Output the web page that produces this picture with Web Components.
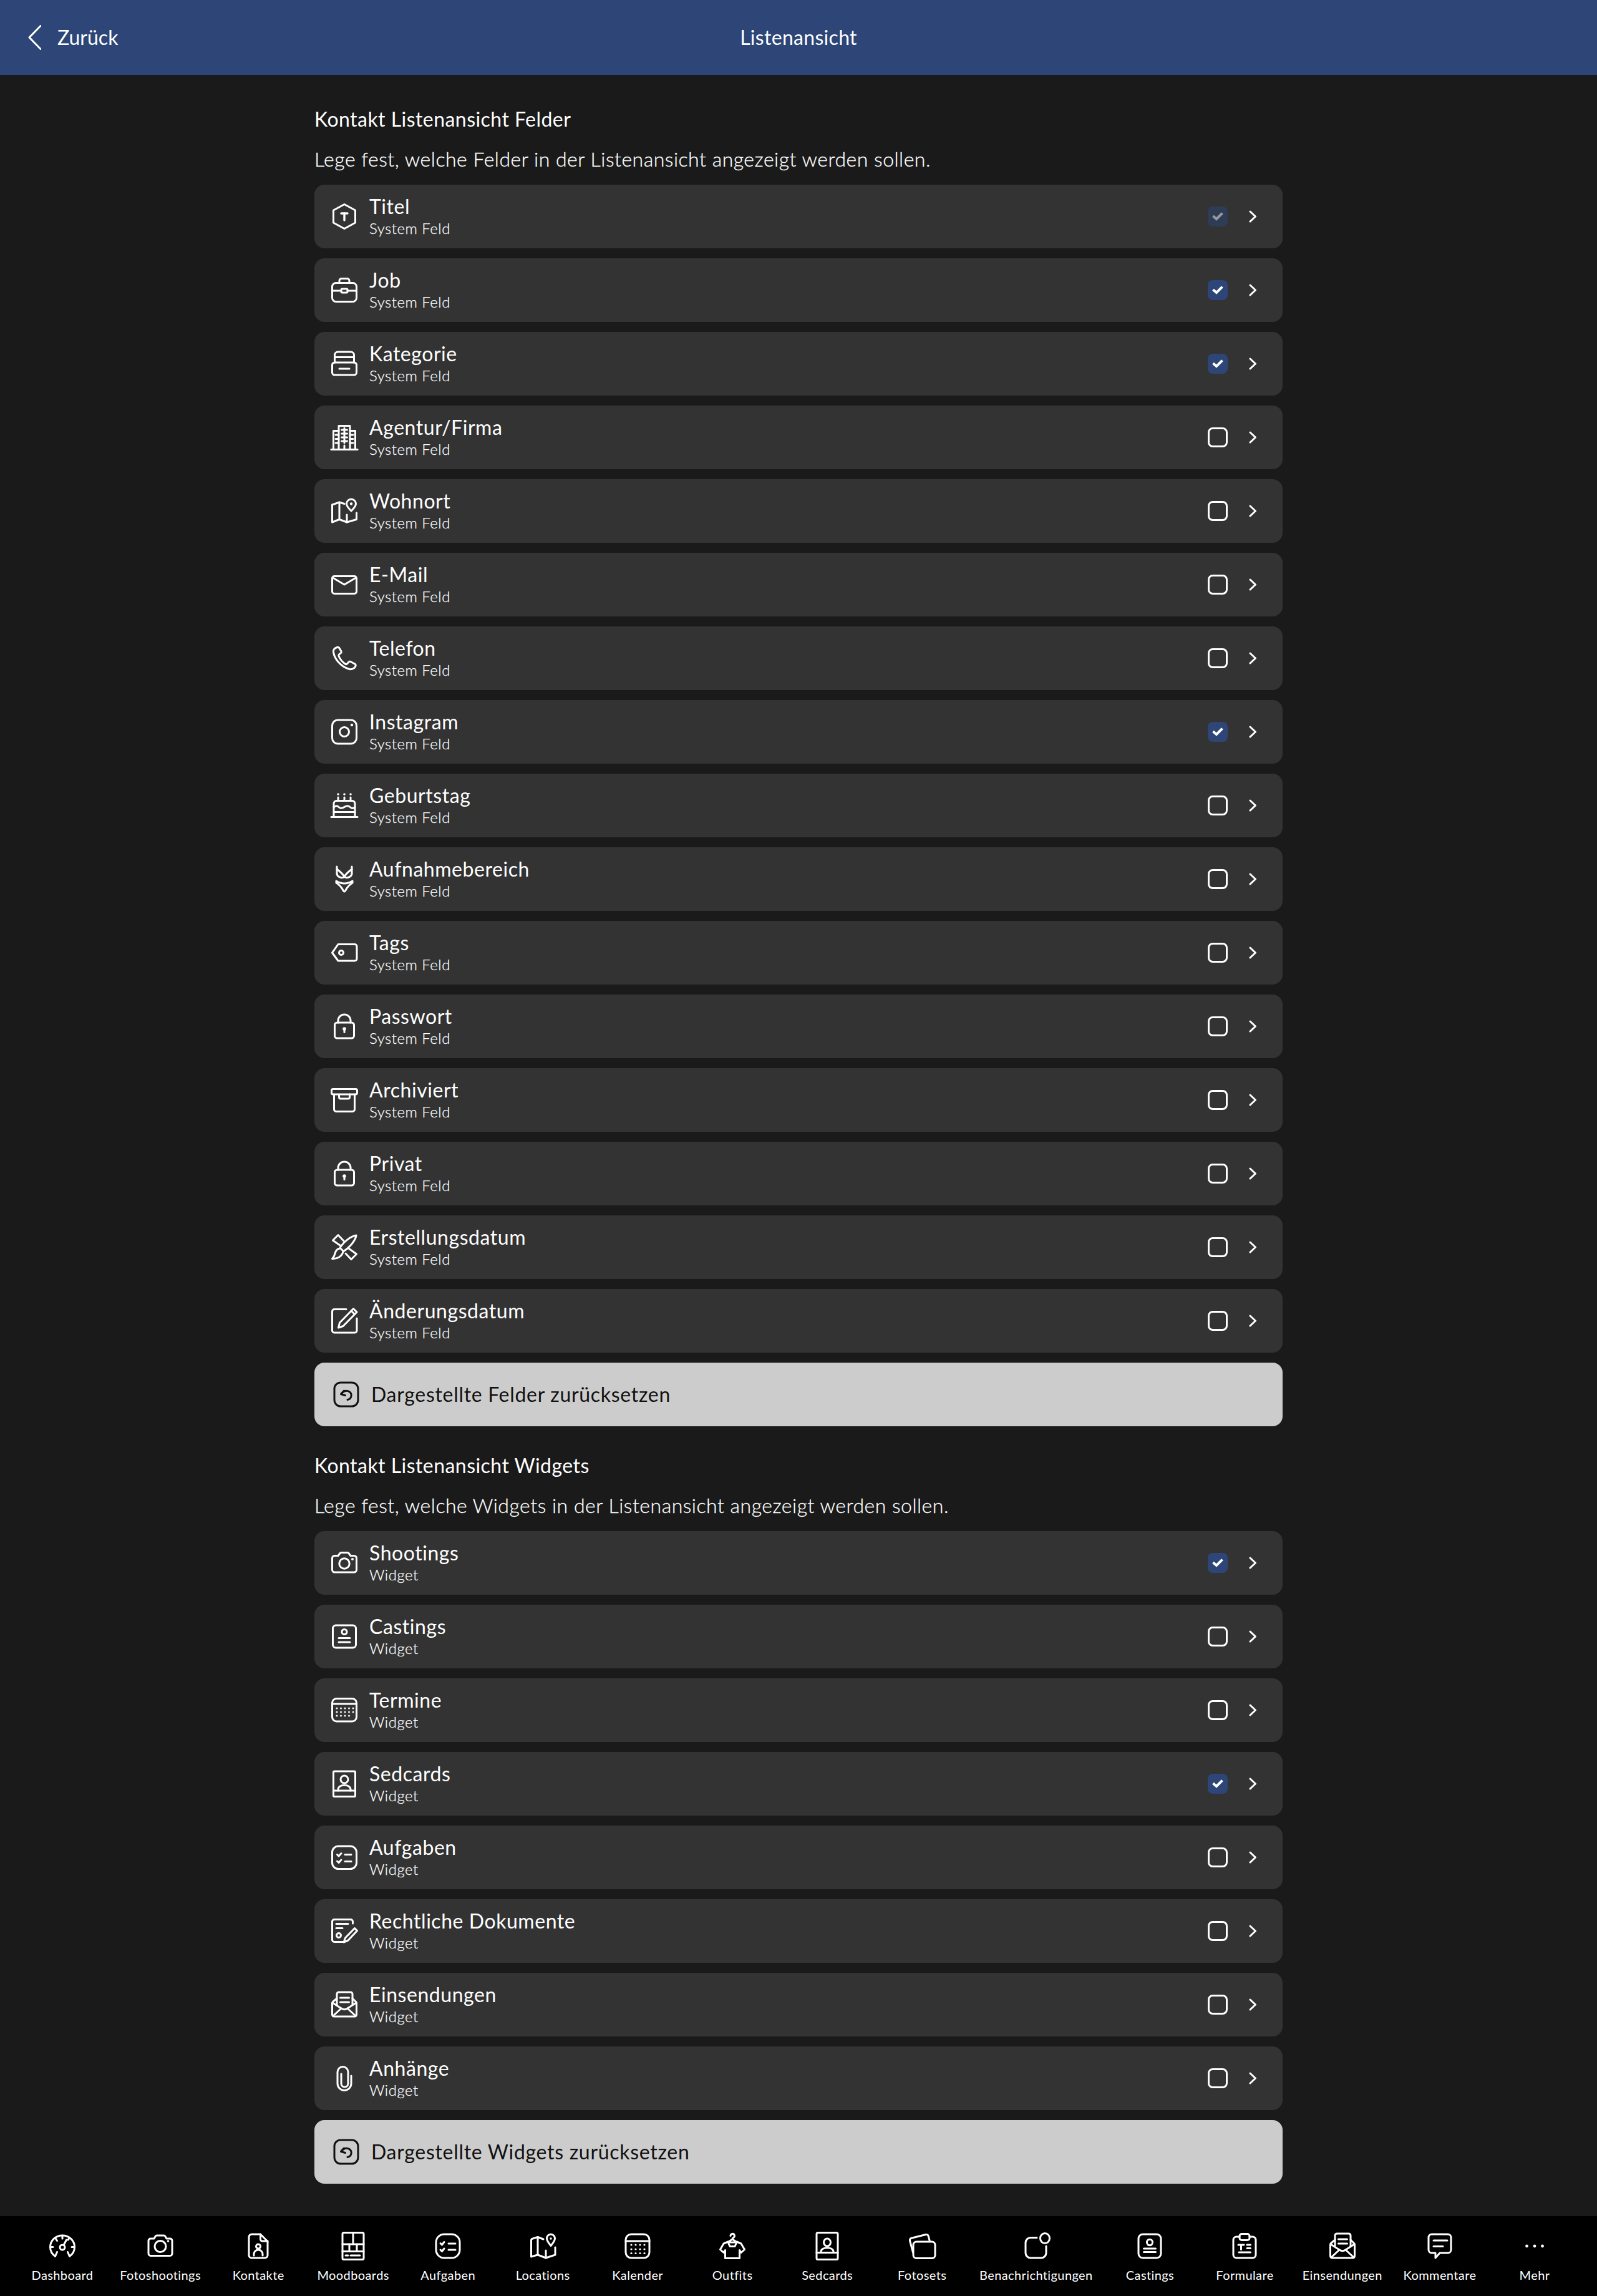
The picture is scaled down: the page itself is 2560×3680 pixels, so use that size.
<!DOCTYPE html>
<html lang="de">
<head>
<meta charset="utf-8">
<title>Listenansicht</title>
<style>
html,body{margin:0;padding:0;background:#1a1a1a;}
body{font-family:"Lato","Noto Sans",sans-serif;color:#fff;}
</style>
</head>
<body>
<x-app>
  <x-header slot="header" back="Zurück">Listenansicht</x-header>
  <x-section heading="Kontakt Listenansicht Felder" desc="Lege fest, welche Felder in der Listenansicht angezeigt werden sollen.">
    <x-row icon="titel" checked dim>Titel<span slot="sub">System Feld</span></x-row>
    <x-row icon="job" checked>Job<span slot="sub">System Feld</span></x-row>
    <x-row icon="kategorie" checked>Kategorie<span slot="sub">System Feld</span></x-row>
    <x-row icon="agentur">Agentur/Firma<span slot="sub">System Feld</span></x-row>
    <x-row icon="wohnort">Wohnort<span slot="sub">System Feld</span></x-row>
    <x-row icon="mail">E-Mail<span slot="sub">System Feld</span></x-row>
    <x-row icon="telefon">Telefon<span slot="sub">System Feld</span></x-row>
    <x-row icon="instagram" checked>Instagram<span slot="sub">System Feld</span></x-row>
    <x-row icon="cake">Geburtstag<span slot="sub">System Feld</span></x-row>
    <x-row icon="bikini">Aufnahmebereich<span slot="sub">System Feld</span></x-row>
    <x-row icon="tag">Tags<span slot="sub">System Feld</span></x-row>
    <x-row icon="lock">Passwort<span slot="sub">System Feld</span></x-row>
    <x-row icon="archive">Archiviert<span slot="sub">System Feld</span></x-row>
    <x-row icon="lock">Privat<span slot="sub">System Feld</span></x-row>
    <x-row icon="design">Erstellungsdatum<span slot="sub">System Feld</span></x-row>
    <x-row icon="edit">Änderungsdatum<span slot="sub">System Feld</span></x-row>
    <x-reset>Dargestellte Felder zurücksetzen</x-reset>
  </x-section>
  <x-section second heading="Kontakt Listenansicht Widgets" desc="Lege fest, welche Widgets in der Listenansicht angezeigt werden sollen.">
    <x-row icon="camera" checked>Shootings<span slot="sub">Widget</span></x-row>
    <x-row icon="casting">Castings<span slot="sub">Widget</span></x-row>
    <x-row icon="termine">Termine<span slot="sub">Widget</span></x-row>
    <x-row icon="sedcard" checked>Sedcards<span slot="sub">Widget</span></x-row>
    <x-row icon="tasks">Aufgaben<span slot="sub">Widget</span></x-row>
    <x-row icon="legal">Rechtliche Dokumente<span slot="sub">Widget</span></x-row>
    <x-row icon="inbox">Einsendungen<span slot="sub">Widget</span></x-row>
    <x-row icon="clip">Anhänge<span slot="sub">Widget</span></x-row>
    <x-reset>Dargestellte Widgets zurücksetzen</x-reset>
  </x-section>
  <x-nav slot="nav">
    <x-nav-item icon="dashboard">Dashboard</x-nav-item>
    <x-nav-item icon="navcamera">Fotoshootings</x-nav-item>
    <x-nav-item icon="contact">Kontakte</x-nav-item>
    <x-nav-item icon="mood">Moodboards</x-nav-item>
    <x-nav-item icon="navtasks">Aufgaben</x-nav-item>
    <x-nav-item icon="navmap">Locations</x-nav-item>
    <x-nav-item icon="calendar">Kalender</x-nav-item>
    <x-nav-item icon="outfit">Outfits</x-nav-item>
    <x-nav-item icon="navsed">Sedcards</x-nav-item>
    <x-nav-item icon="sets">Fotosets</x-nav-item>
    <x-nav-item icon="bell">Benachrichtigungen</x-nav-item>
    <x-nav-item icon="navcast">Castings</x-nav-item>
    <x-nav-item icon="form">Formulare</x-nav-item>
    <x-nav-item icon="inbox">Einsendungen</x-nav-item>
    <x-nav-item icon="comment">Kommentare</x-nav-item>
    <x-nav-item icon="more">Mehr</x-nav-item>
  </x-nav>
</x-app>
<script>
const dot=(x,y,r=1.7)=>`<circle cx="${x}" cy="${y}" r="${r}" fill="currentColor" stroke="none"/>`;
const ICONS={
 titel:`<path d="M24 4.500 L41.500 14 V34 L24 43.500 L6.500 34 V14 Z"/><path d="M19 19 H29" stroke-width="3.400"/><path d="M24 19 V30" stroke-width="3.400"/>`,
 job:`<rect x="4.500" y="12.500" width="39" height="30" rx="6"/><path d="M16 12 V9 a3.500 3.500 0 0 1 3.500-3.500 H28.500 a3.500 3.500 0 0 1 3.500 3.500 V12"/><path d="M4.500 25 H19 M29 25 H43.500"/><rect x="19" y="22" width="10" height="6" rx="1.500"/>`,
 kategorie:`<path d="M8.500 22 V10 a5 5 0 0 1 5-5 H34.500 a5 5 0 0 1 5 5 V22"/><path d="M8.500 13.500 H39.500"/><rect x="4.500" y="22" width="39" height="20" rx="4"/><path d="M16 32 H32"/>`,
 agentur:`<path d="M3 43.500 H45"/><path d="M15 43 V5.500 H33 V43"/><path d="M6.500 43 V13.500 H15 M33 13.500 H41.500 V43"/><path d="M19.500 12 H28.500 M19.500 18 H28.500 M19.500 24 H28.500 M19.500 30 H28.500"/><path d="M24 9 V33"/><path d="M24 37 V43"/><path d="M10 20 H15 M10 26.500 H15 M10 33 H15 M33 20 H38 M33 26.500 H38 M33 33 H38"/>`,
 wohnort:`<path d="M24 12.500 L16 10 L4.500 14 V42 L16 37.500 L28 42 L43.500 37.500 V27"/><path d="M16 10 V37.500"/><path d="M28 30 V42"/><path d="M35 24 C31 20 27.500 16.500 27.500 12.500 A7.500 7.500 0 0 1 42.500 12.500 C42.500 16.500 39 20 35 24 Z"/>${dot(35,12.5,2.2)}`,
 mail:`<rect x="4.500" y="10.500" width="39" height="28" rx="3.500"/><path d="M5.500 13 L24 24 L42.500 13"/>`,
 telefon:`<path d="M12.500 6.500 C8.500 7.500 6 10.500 6.500 14 C8 25.500 19 38 32 41.500 C36.500 42.500 41 39.500 42 36.500 C42.500 35 42 34 41 33.300 L34 29.500 C32.800 29 31.700 29.300 31 30.100 L28.300 33 C27.600 33.800 26.500 33.900 25.600 33.300 C20.800 30 17 25.500 15 20.500 C14.600 19.500 14.900 18.500 15.600 17.900 L18.400 15.600 C19.200 14.900 19.400 13.900 19 13 L15.800 7.500 C15 6.500 13.800 6.200 12.500 6.500 Z"/>`,
 instagram:`<rect x="4.500" y="5" width="39" height="38" rx="9"/><circle cx="24" cy="24" r="7.500"/>${dot(36,13,2.2)}`,
 cake:`<path d="M3 42.500 H45"/><path d="M7 42 V21 a4.500 4.500 0 0 1 4.500-4.500 H36.500 a4.500 4.500 0 0 1 4.500 4.500 V42"/><path d="M7 27 C10 24 12.500 24 15 26.500 C17.500 29 20 29 24 26.500 C28 24 30.500 24 33 26.500 C35.500 29 38 29 41 27"/><path d="M7 34.500 H41"/><path d="M14 11 V16 M24 11 V16 M34 11 V16"/>${dot(14,6,1.8)}${dot(24,6,1.8)}${dot(34,6,1.8)}`,
 bikini:`<path d="M12 4 V15 M36 4 V15"/><path d="M12 8 C16 11 21 15 24 20 C27 15 32 11 36 8"/><path d="M12 15 C12 20 20 24 24 20 C28 24 36 20 36 15"/><path d="M11 27 C16 30 20 31 24 31 C28 31 32 30 37 27 V30 C32 33 28 38 26 42 C25 44.500 23 44.500 22 42 C20 38 16 33 11 30 Z"/>`,
 tag:`<path d="M14 10.500 H40.500 a3.500 3.500 0 0 1 3.500 3.500 V33.500 a3.500 3.500 0 0 1-3.500 3.500 H14 L4.500 24 Z"/><circle cx="19" cy="24" r="3.500"/>`,
 lock:`<rect x="8.500" y="18" width="31" height="25" rx="4"/><path d="M14 18 V15 a10 10 0 0 1 20 0 V18"/>${dot(24,28,2.800)}<path d="M24 28 V33.500"/>`,
 archive:`<rect x="3.500" y="6.500" width="41" height="8.500" rx="2.500"/><path d="M7.500 15 V39 a3.500 3.500 0 0 0 3.500 3.500 H37 a3.500 3.500 0 0 0 3.500-3.500 V15"/><path d="M15.500 15 V19.500 a2.500 2.500 0 0 0 2.500 2.500 H30 a2.500 2.500 0 0 0 2.500-2.500 V15"/>`,
 design:`<path d="M17 21 L5.500 13 L14 4.500 L23 14"/><path d="M31 26 L43.500 35 L35 43.500 L26 34"/><path d="M43 5 C35 6 23 15 17 25 L22.500 30.500 C32 25 42 13 43 5 Z"/><path d="M16.500 26 C11 27 10 31 8.500 35.500 C8 38 6.500 40.500 4.500 42.500 C12 43 20.500 39 22 31"/>`,
 edit:`<path d="M27 5.500 H8 a3.500 3.500 0 0 0-3.500 3.500 V39.500 a3.500 3.500 0 0 0 3.500 3.500 H40.500 a3.500 3.500 0 0 0 3.500-3.500 V20"/><path d="M38.500 4.500 L44 10 L22 32.500 L14.500 35 L16.500 27 Z"/><path d="M35 8 L40.500 13.500"/>`,
 camera:`<path d="M4.500 16.500 a4 4 0 0 1 4-4 H14 L17 8.500 a3 3 0 0 1 2-1 H29 a3 3 0 0 1 2 1 L34 12.500 H39.500 a4 4 0 0 1 4 4 V35 a4 4 0 0 1-4 4 H8.500 a4 4 0 0 1-4-4 Z"/><circle cx="24" cy="25" r="8.200"/>${dot(37,18,2)}`,
 casting:`<rect x="5.500" y="6" width="37" height="36" rx="5"/><circle cx="24" cy="16.500" r="4"/><path d="M15 26.500 H33 M15 33 H33"/>`,
 termine:`<rect x="4.500" y="5.500" width="39" height="36.500" rx="7"/><path d="M4.500 14 H43.500"/>${[21,27,33].map(y=>[12,18.500,25,31.500,38].map(x=>(y==33&&x==38)?'':dot(x,y,1.500)).join('')).join('')}`,
 sedcard:`<rect x="6.500" y="4" width="35" height="40.500" rx="1.500"/><path d="M6.500 35 H41.500"/><circle cx="24" cy="17" r="6"/><path d="M14 35 V33 C14 24 34 24 34 33 V35"/>`,
 tasks:`<rect x="4.500" y="6" width="39" height="36.500" rx="10"/><path d="M12.500 19.500 L15 22 L19 17.500 M12.500 30 L15 32.500 L19 28"/><path d="M25 19.500 H35 M25 30.500 H35"/>`,
 legal:`<path d="M37.500 12 V9 a3.500 3.500 0 0 0-3.500-3.500 H8 a3.500 3.500 0 0 0-3.500 3.500 V38 a3.500 3.500 0 0 0 3.500 3.500 H22"/><path d="M11 12.500 H30 M11 19.500 H21"/><circle cx="15" cy="31" r="3.500"/><path d="M40.500 19.500 L44.500 23.500 L30 39 L23 42 L25.500 35 Z"/>`,
 inbox:`<path d="M12 24 V7 a3 3 0 0 1 3-3 H34 a3 3 0 0 1 3 3 V24"/><path d="M17.500 13 H31.500"/><path d="M17.500 20 H31.500"/><path d="M12 14 L6 19 a4 4 0 0 0-1.500 3 V40 a3 3 0 0 0 3 3 H40.500 a3 3 0 0 0 3-3 V22 a4 4 0 0 0-1.500-3 L37 14"/><path d="M5 21 L19 30 C22 32 26 32 29 30 L43 21"/><path d="M6 42 L19 30"/><path d="M42 42 L29 30"/>`,
 clip:`<path d="M35 20 V32.500 a11 11 0 0 1-22 0 V14 a8.500 8.500 0 0 1 17 0 V32.500 a5.500 5.500 0 0 1-11 0 V17"/>`,
 dashboard:`<path d="M12.500 40.500 C7.500 37 4.500 31.500 4.500 25.500 C4.500 15 13 7 24 7 C35 7 43.500 15 43.500 25.500 C43.500 31.500 40.500 37 35.500 40.500 L32.500 33.500 M12.500 40.500 L15.500 33.500"/><circle cx="24" cy="26" r="4"/><path d="M26 22.500 L30.500 14"/><path d="M24 7 V12 M13 11.500 L15.500 15.500 M35 11.500 L33 14 M4.500 25.500 H9 M39 25.500 H43.500"/>`,
 navcamera:`<path d="M5 15.500 a3.500 3.500 0 0 1 3.500-3.500 H14 L16 8.500 a3 3 0 0 1 2.500-1.500 H29.500 a3 3 0 0 1 2.500 1.500 L34 12 H39.500 a3.500 3.500 0 0 1 3.500 3.500 V36 a3.500 3.500 0 0 1-3.500 3.500 H8.500 a3.500 3.500 0 0 1-3.500-3.500 Z"/><circle cx="24" cy="24.500" r="9"/>${dot(36.500,16,1.800)}`,
 contact:`<path d="M27.500 5 H13.500 a4.500 4.500 0 0 0-4.500 4.500 V38.500 a4.500 4.500 0 0 0 4.500 4.500 H34.500 a4.500 4.500 0 0 0 4.500-4.500 V16.500 Z"/><path d="M27.500 5 V13 a3 3 0 0 0 3 3 H39"/><circle cx="24" cy="24.500" r="3.500"/><path d="M17 39 V37 a7 7 0 0 1 14 0 V39"/>`,
 mood:`<rect x="7" y="2.500" width="34" height="43" rx="2"/><path d="M7 21 H41 M7 32.500 H41"/><path d="M24 2.500 V21 M18 21 V32.500 M30 21 V32.500"/><path d="M12 39 H16 M20 39 H35"/>`,
 navtasks:`<rect x="5" y="5" width="38" height="38" rx="13"/><path d="M12 19.500 L14.500 22 L18 17.500 M12 30 L14.500 32.500 L18 28"/><path d="M25 20 H36 M25 30 H36"/>`,
 navmap:`<path d="M25 13 L16 9.500 L8 12 a3 3 0 0 0-2.500 3 V41 L16 38 L29 43 L44 38 V26"/><path d="M16 9.500 V38"/><path d="M29 31 V43"/><path d="M37 23.500 C33.500 19 30.500 15.500 30.500 12 A6.500 7 0 0 1 43.500 12 C43.500 15.500 40.500 19 37 23.500 Z"/>${dot(37,12,1.800)}`,
 calendar:`<rect x="5" y="5" width="38" height="38" rx="9"/><path d="M5 16 H43"/>${[22,29,35.500].map(y=>[14,21,28,35].map(x=>dot(x,y,1.600)).join('')).join('')}`,
 outfit:`<path d="M21 7.500 a3.200 3.200 0 1 1 4.500 3 C24.500 11 24 12 24 13"/><path d="M24 13 L31.500 18 H16.500 Z"/><path d="M18 20 L20 24.500 H28 L30 20" /><path d="M17 17 L10 20 L4.500 29.500 L10 34.500 L12.500 30.500 V43.500 H35.500 V30.500 L38 34.500 L43.500 29.500 L38 20 L31 17"/>`,
 navsed:`<rect x="7" y="2.500" width="34" height="43" rx="2"/><path d="M7 34.500 H41"/><ellipse cx="24" cy="18" rx="5.500" ry="6"/><path d="M14 34.500 V33 C14 24.500 34 24.500 34 33 V34.500"/>`,
 sets:`<rect x="10" y="17" width="35" height="26.500" rx="5"/><path d="M9.500 34 L4.500 15.500 a3.500 3.500 0 0 1 2.500-4.200 L30 5.500 a3.500 3.500 0 0 1 4.200 2.500 L36.500 16.500"/>`,
 bell:`<path d="M25 10.500 H15 a8 8 0 0 0-8 8 V35 a8 8 0 0 0 8 8 H32 a8 8 0 0 0 8-8 V24"/><ellipse cx="38" cy="11.500" rx="7.500" ry="8"/>`,
 navcast:`<rect x="6" y="5" width="36" height="38" rx="7"/><ellipse cx="24" cy="18" rx="4.500" ry="4.800"/><path d="M14.500 28 H33.500 M14.500 33.500 H33.500"/>`,
 form:`<path d="M16 9 H11 a5 5 0 0 0-5 5 V38 a5 5 0 0 0 5 5 H37 a5 5 0 0 0 5-5 V14 a5 5 0 0 0-5-5 H32"/><rect x="16" y="4.500" width="16" height="10" rx="3.500"/><path d="M14 22 H23 M18.500 22 V29.500"/><path d="M28 22 H33.500 M28 27.500 H33.500"/><path d="M15 34 H33.500"/>`,
 comment:`<path d="M11 5 H37 a5 5 0 0 1 5 5 V30 a5 5 0 0 1-5 5 H24 L17 43 V35 H11 a5 5 0 0 1-5-5 V10 a5 5 0 0 1 5-5 Z"/><path d="M14 15 H36 M14 24.500 H29"/>`,
 more:`${dot(11.5,24,2.4)}${dot(24,24,2.4)}${dot(36.5,24,2.4)}`
};
class XIcon extends HTMLElement{
  connectedCallback(){
    if(this.shadowRoot)return;
    const r=this.attachShadow({mode:'open'});
    r.innerHTML=`<style>:host{display:block;width:48px;height:48px;flex:none;color:inherit}svg{display:block;width:48px;height:48px;overflow:visible}</style>
    <svg viewBox="0 0 48 48" fill="none" stroke="currentColor" stroke-width="3" stroke-linecap="round" stroke-linejoin="round">${ICONS[this.getAttribute('name')]||''}</svg>`;
  }
}
customElements.define('x-icon',XIcon);

class XApp extends HTMLElement{
  constructor(){super();this.attachShadow({mode:'open'}).innerHTML=`<style>
  :host{display:flex;flex-direction:column;min-height:3680px;background:#1a1a1a}
  main{flex:1;display:flex;flex-direction:column;align-items:center}
  </style><slot name="header"></slot><main><slot></slot></main><slot name="nav"></slot>`;}
}
customElements.define('x-app',XApp);

class XHeader extends HTMLElement{
  constructor(){super();const b=this.getAttribute('back')||'';this.attachShadow({mode:'open'}).innerHTML=`<style>
  :host{display:grid;grid-template-columns:1fr auto 1fr;align-items:center;height:120px;background:#2d4677;color:#fff;font:400 32px/48px "Lato",sans-serif;padding:0 45px;box-sizing:border-box}
  .back{display:flex;align-items:center;gap:26px}
  svg{width:21px;height:40px;display:block}
  .title{letter-spacing:.3px}
  </style><div class="back"><svg viewBox="0 0 21 40" fill="none" stroke="#fff" stroke-width="3" stroke-linecap="round" stroke-linejoin="round"><path d="M20 1.500 L2 20 L20 38.500"/></svg><span id="b"></span></div><div class="title"><slot></slot></div><div></div>`;
  this.shadowRoot.getElementById('b').textContent=b;}
}
customElements.define('x-header',XHeader);

class XSection extends HTMLElement{
  connectedCallback(){
    if(this.shadowRoot)return;
    const r=this.attachShadow({mode:'open'});
    r.innerHTML=`<style>
    :host{display:flex;flex-direction:column;width:1552px;padding-top:${this.hasAttribute('second')?39:47}px;box-sizing:content-box}
    h2{margin:0 0 16px;font:400 32px/48px "Lato",sans-serif;color:#fff;letter-spacing:.45px}
    p{margin:0 0 17px;font:300 32px/48px "Lato",sans-serif;color:#fff;letter-spacing:.5px;-webkit-text-stroke:.3px #fff}
    .list{display:flex;flex-direction:column;gap:16px}
    </style><h2></h2><p></p><div class="list"><slot></slot></div>`;
    r.querySelector('h2').textContent=this.getAttribute('heading');
    r.querySelector('p').textContent=this.getAttribute('desc');
  }
}
customElements.define('x-section',XSection);

class XRow extends HTMLElement{
  connectedCallback(){
    if(this.shadowRoot)return;
    const c=this.hasAttribute('checked'),d=this.hasAttribute('dim');
    this.attachShadow({mode:'open'}).innerHTML=`<style>
    :host{display:flex;align-items:center;height:102px;background:#333;border-radius:16px;padding:0 36px 0 24px;box-sizing:border-box;color:#fff}
    .text{flex:1;display:flex;flex-direction:column;margin-left:16px;padding-bottom:2px;min-width:0}
    .t{font:400 32px/40px "Lato",sans-serif;letter-spacing:.55px}
    .s{font:300 24px/30px "Lato",sans-serif;letter-spacing:.5px;-webkit-text-stroke:.25px #fff}
    .box{width:32px;height:32px;box-sizing:border-box;border-radius:8px;display:flex;align-items:center;justify-content:center;flex:none}
    .box.off{border:3.500px solid #fff}
    .box.on{background:#2d4677}
    .box.dim{opacity:.5}
    .box svg{width:18px;height:14px;display:block}
    .chev{width:12px;height:20px;margin:0 6px 0 34px;display:block;flex:none}
    </style><x-icon name="${this.getAttribute('icon')}"></x-icon>
    <div class="text"><div class="t"><slot></slot></div><div class="s"><slot name="sub"></slot></div></div>
    <div class="box ${c?'on':'off'} ${d?'dim':''}">${c?`<svg viewBox="0 0 18 14" fill="none" stroke="#fff" stroke-width="4" stroke-linecap="square"><path d="M3 7.500 L7 11 L15 3"/></svg>`:''}</div>
    <svg class="chev" viewBox="0 0 12 20" fill="none" stroke="#fff" stroke-width="3" stroke-linecap="round" stroke-linejoin="round"><path d="M2 2 L10.500 10 L2 18"/></svg>`;
  }
}
customElements.define('x-row',XRow);

class XReset extends HTMLElement{
  constructor(){super();this.attachShadow({mode:'open'}).innerHTML=`<style>
  :host{display:flex;align-items:center;height:102px;background:#ccc;border-radius:16px;padding:0 24px 0 27px;box-sizing:border-box;color:#111;font:400 32px/48px "Lato",sans-serif;letter-spacing:.7px;gap:16px}
  svg{width:48px;height:48px;display:block;flex:none}
  </style><svg viewBox="0 0 48 48" fill="none" stroke="#111" stroke-width="3" stroke-linecap="round" stroke-linejoin="round"><rect x="5" y="5" width="38" height="38" rx="10"/><path d="M20.500 18 L15.500 23.500 L22.500 25.500"/><path d="M16 23.500 C19 18 25 17 29 19.500 C34 23 33 31 26 32.500"/></svg><span><slot></slot></span>`;}
}
customElements.define('x-reset',XReset);

class XNav extends HTMLElement{
  constructor(){super();this.attachShadow({mode:'open'}).innerHTML=`<style>
  :host{display:flex;justify-content:space-between;height:128px;background:#000;padding:24px 24px 0;box-sizing:border-box;color:#fff}
  </style><slot></slot>`;}
}
customElements.define('x-nav',XNav);

class XNavItem extends HTMLElement{
  connectedCallback(){
    if(this.shadowRoot)return;
    this.attachShadow({mode:'open'}).innerHTML=`<style>
    :host{display:flex;flex-direction:column;align-items:center;min-width:152px;padding:0 17px;box-sizing:border-box;color:#fff}
    span{display:block;margin-top:8px;font:400 20px/28px "Lato",sans-serif;letter-spacing:.4px;white-space:nowrap}
    </style><x-icon name="${this.getAttribute('icon')}"></x-icon><span><slot></slot></span>`;
  }
}
customElements.define('x-nav-item',XNavItem);
</script>
</body>
</html>
